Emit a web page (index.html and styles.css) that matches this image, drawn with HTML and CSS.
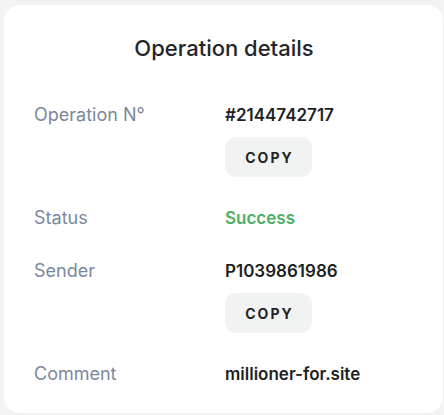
FILE: index.html
```html
<!DOCTYPE html>
<html>
<head>
<meta charset="utf-8">
<link rel="stylesheet" href="styles.css">
</head>
<body>
<div class="card">
  <h1 class="title">Operation details</h1>
  <div class="rows">
    <div class="row">
      <div class="label">Operation N°</div>
      <div class="value">
        <div class="text">#2144742717</div>
        <button class="copy">COPY</button>
      </div>
    </div>
    <div class="row">
      <div class="label">Status</div>
      <div class="value"><div class="text success">Success</div></div>
    </div>
    <div class="row">
      <div class="label">Sender</div>
      <div class="value">
        <div class="text">P1039861986</div>
        <button class="copy">COPY</button>
      </div>
    </div>
    <div class="row">
      <div class="label">Comment</div>
      <div class="value"><div class="text">millioner-for.site</div></div>
    </div>
  </div>
</div>
</body>
</html>
```
FILE: styles.css
```css
html, body { margin: 0; padding: 0; }
body {
  background: #f3f3f3;
  font-family: "Inter", "Lato", sans-serif;
  width: 444px;
  height: 415px;
  overflow: hidden;
}
.card {
  background: #ffffff;
  margin: 5px 1px 0 4px;
  border-radius: 16px;
  padding: 29px 31px 28px 30px;
  height: 408px;
  box-sizing: border-box;
}
.title {
  margin: 0;
  text-align: center;
  font-size: 22px;
  line-height: 28px;
  font-weight: 500;
  color: #24262b;
  padding-left: 2px;
}
.rows {
  margin-top: 41px;
  display: flex;
  flex-direction: column;
  gap: 29px;
}
.row {
  display: grid;
  grid-template-columns: 191px 1fr;
}
.label {
  font-size: 18px;
  line-height: 24px;
  color: #7b879e;
  font-weight: 400;
}
.value {
  display: flex;
  flex-direction: column;
  align-items: flex-start;
  gap: 10px;
}
.text {
  font-size: 17px;
  line-height: 24px;
  color: #1e1f24;
  font-weight: 600;
}
.success { color: #4caf62; }
.copy {
  border: none;
  background: #f1f2f2;
  border-radius: 11px;
  width: 87px;
  height: 40px;
  font-family: inherit;
  font-size: 14px;
  font-weight: 700;
  letter-spacing: 2px;
  color: #222428;
  padding: 0 0 0 2px;
}
```
